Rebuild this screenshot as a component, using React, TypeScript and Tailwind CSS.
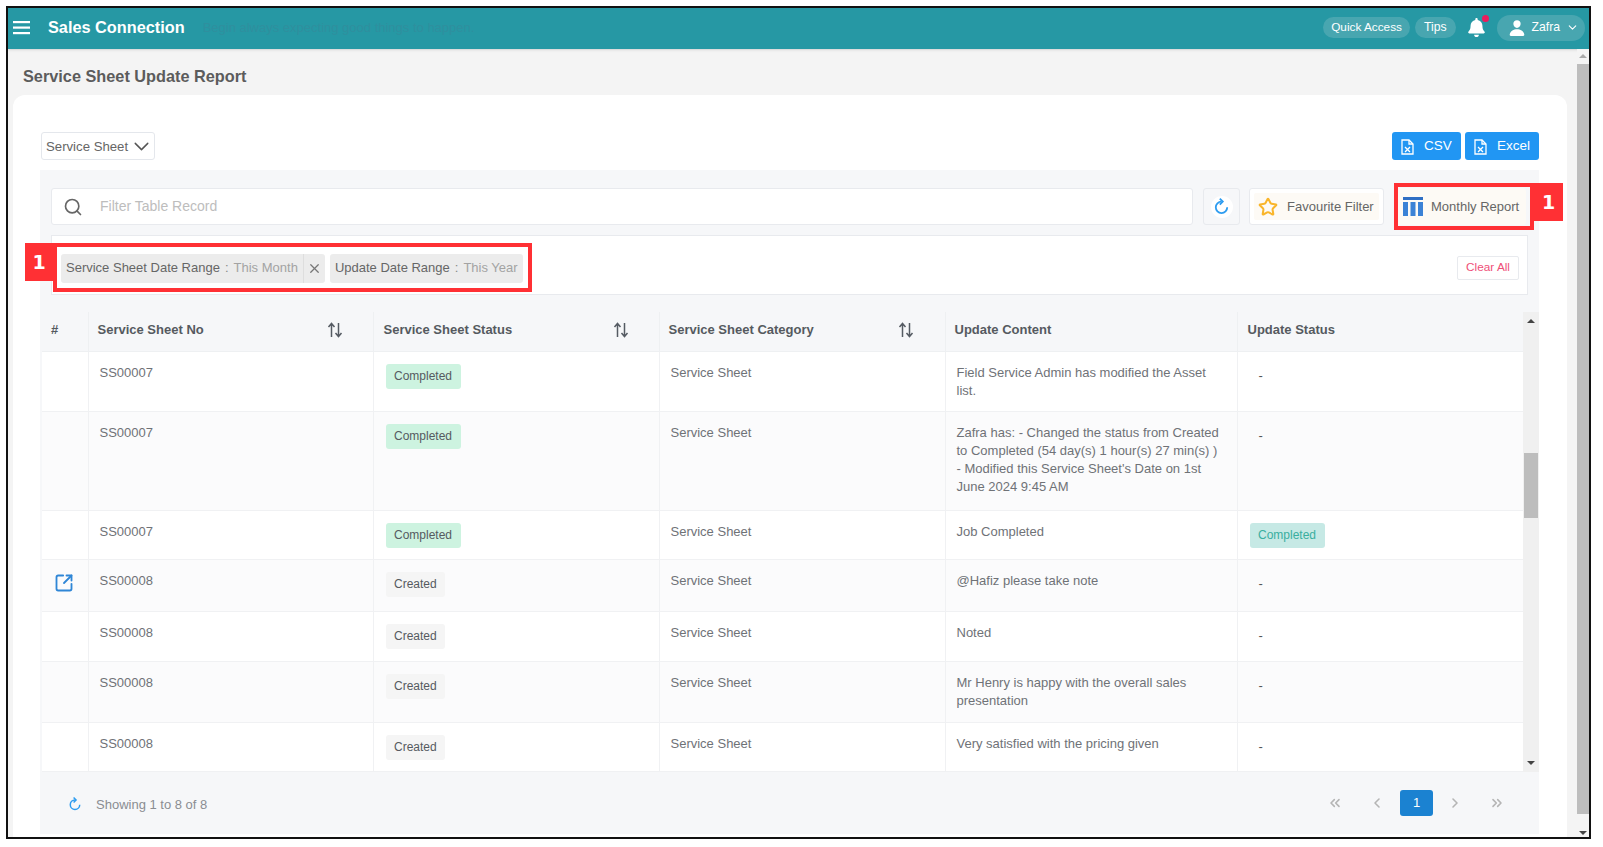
import React from "react";
import {
  ChevronDown,
  ChevronLeft,
  ChevronRight,
  ChevronsLeft,
  ChevronsRight,
  Search,
  SquareArrowOutUpRight,
  Star,
  X,
} from "lucide-react";
import { FaBell } from "react-icons/fa";
import { IoPerson } from "react-icons/io5";

interface Row {
  no: string;
  status: "Completed" | "Created";
  content: React.ReactNode;
  update?: boolean;
  link?: boolean;
  rowClass: string;
  alt?: boolean;
}

const rows: Row[] = [
  {
    no: "SS00007",
    status: "Completed",
    content: "Field Service Admin has modified the Asset list.",
    rowClass: "h-[60px]",
  },
  {
    no: "SS00007",
    status: "Completed",
    content:
      "Zafra has: - Changed the status from Created to Completed (54 day(s) 1 hour(s) 27 min(s) ) - Modified this Service Sheet's Date on 1st June 2024 9:45 AM",
    rowClass: "h-[99px]",
    alt: true,
  },
  {
    no: "SS00007",
    status: "Completed",
    content: "Job Completed",
    update: true,
    rowClass: "h-[49px]",
  },
  {
    no: "SS00008",
    status: "Created",
    content: "@Hafiz please take note",
    link: true,
    rowClass: "h-[52px]",
    alt: true,
  },
  {
    no: "SS00008",
    status: "Created",
    content: "Noted",
    rowClass: "h-[50px]",
  },
  {
    no: "SS00008",
    status: "Created",
    content: "Mr Henry is happy with the overall sales presentation",
    rowClass: "h-[61px]",
    alt: true,
  },
  {
    no: "SS00008",
    status: "Created",
    content: "Very satisfied with the pricing given",
    rowClass: "h-[49px]",
  },
];

const SortIcon = () => (
  <svg width="16" height="16" viewBox="0 0 16 16" fill="none" stroke="#555b63" strokeWidth="1.5">
    <path d="M4.5 15V2M1.5 5l3-3.5 3 3.5" />
    <path d="M11.5 1v13M8.5 11l3 3.5 3-3.5" />
  </svg>
);

const FileXIcon = () => (
  <svg width="13" height="16" viewBox="0 0 13 16" fill="none" stroke="white" strokeWidth="1.3">
    <path d="M1 1h7l4 4v10H1z" />
    <path d="M8 1v4h4" />
    <path d="M4 8l5 5M9 8l-5 5" />
  </svg>
);

const ColumnsIcon = () => (
  <svg width="20" height="19" viewBox="0 0 20 19" fill="#3b82d6">
    <rect x="0" y="0" width="20" height="3" fill="#2f6fc4" />
    <rect x="0" y="5" width="5" height="14" />
    <rect x="7.5" y="5" width="5" height="14" />
    <rect x="15" y="5" width="5" height="14" />
  </svg>
);

// circular arrow, open at the upper right with the head on top
const RefreshIcon = ({ size }: { size: number }) => (
  <svg width={size} height={size} viewBox="0 0 16 16" fill="none" stroke="#2d9cf0" strokeWidth="1.7">
    <path d="M8 3.4A5.4 5.4 0 1 0 13.4 8.8" />
    <path d="M6.4 0.6L9.2 3.4L6.4 6.2" />
  </svg>
);

const Marker = ({ className }: { className: string }) => (
  <div
    className={
      "absolute flex items-center justify-center bg-[#ff3034] text-[19px] font-bold text-white " +
      className
    }
    style={{ fontFamily: '"DejaVu Sans", sans-serif' }}
  >
    1
  </div>
);

const Chip = ({ label, value, close }: { label: string; value: string; close?: boolean }) => (
  <div className="flex h-[29px] items-center rounded-[3px] bg-[#ececec] text-[13px]">
    <span className="whitespace-nowrap pl-[5px] pr-[5px] text-[#666]">
      {label}
      <span className="mx-[5px] text-[#888]">:</span>
      <span className="text-[#a3a3a3]">{value}</span>
    </span>
    {close && (
      <span className="flex h-full w-[22px] items-center justify-center border-l border-[#dedede]">
        <X size={15} color="#777" />
      </span>
    )}
  </div>
);

const App: React.FC = () => {
  return (
    <div
      className="h-[847px] w-[1603px] overflow-hidden bg-white pl-[6px] pt-[6px] text-[13px] text-[#6f7277]"
      style={{ fontFamily: '"Liberation Sans", Arial, sans-serif' }}
    >
      <div className="flex h-[833px] w-[1585px] flex-col overflow-hidden border-2 border-[#111] bg-[#f4f4f4]">
        <header className="flex h-[41px] shrink-0 items-center bg-[#2698a4] pb-[2px] pl-[5px] pr-[4px] shadow-sm">
          <svg width="18" height="14" viewBox="0 0 18 14" fill="white">
            <rect y="0" width="17" height="2.2" />
            <rect y="5.5" width="17" height="2.2" />
            <rect y="11" width="17" height="2.2" />
          </svg>
          <span className="ml-[17px] text-[16.3px] font-bold text-white">Sales Connection</span>
          <span className="ml-[18px] text-[13px] text-[#2f8f9e]">
            Begin always expecting good things to happen.
          </span>
          <div className="ml-auto flex items-center">
            <span className="flex h-[21px] items-center rounded-full bg-[#48a6b0] px-[8px] text-[11.8px] text-white">
              Quick Access
            </span>
            <span className="ml-[5px] flex h-[21px] items-center rounded-full bg-[#48a6b0] px-[9px] text-[12.2px] text-white">
              Tips
            </span>
            <span className="relative ml-[11px] mr-[11px]">
              <FaBell size={19} color="white" />
              <span className="absolute -right-[3px] -top-[3px] h-[7px] w-[7px] rounded-full bg-[#ec1c5c]" />
            </span>
            <span className="flex h-[26px] items-center rounded-full bg-[#48a6b0] pl-[11px] pr-[6px] text-[12.2px] text-white">
              <IoPerson size={18} color="white" />
              <span className="ml-[6px]">Zafra</span>
              <ChevronDown size={13} className="ml-[6px]" />
            </span>
          </div>
        </header>

        <div className="flex min-h-0 flex-1">
          <div className="flex min-w-0 flex-1 flex-col">
            <h1 className="flex h-[46px] shrink-0 items-center pl-[15px] pt-[9px] text-[16.3px] font-bold text-[#5c5c5c]">
              Service Sheet Update Report
            </h1>
            <div className="ml-[5px] flex w-[1554px] flex-1 flex-col rounded-t-[12px] bg-white pb-[3px] pl-[27px] pr-[28px] pt-[37px]">
              <div className="flex h-[28px] items-center justify-between">
                <div className="ml-[1px] flex h-[28px] w-[114px] items-center justify-between whitespace-nowrap rounded-[3px] border border-[#e4e7ec] pl-[4px] pt-[1px] text-[13.2px] text-[#666]">
                  Service Sheet
                  <ChevronDown size={25} color="#555" strokeWidth={1.4} />
                </div>
                <div className="flex gap-[4px]">
                  <button className="flex h-[28px] w-[69px] items-center justify-center gap-[10px] rounded-[3px] bg-[#2196f3] pt-[1px] text-[13.5px] text-white">
                    <FileXIcon /> CSV
                  </button>
                  <button className="flex h-[28px] w-[74px] items-center justify-center gap-[10px] rounded-[3px] bg-[#2196f3] pt-[1px] text-[13.5px] text-white">
                    <FileXIcon /> Excel
                  </button>
                </div>
              </div>

              <div className="mt-[10px] flex flex-1 flex-col bg-[#f6f7f9]">
                <div className="relative flex pl-[11px] pr-[11px] pt-[18px]">
                  <div className="flex h-[37px] w-[1142px] items-center rounded-[3px] border border-[#e8eaee] bg-white pl-[11px] text-[14px] text-[#bdbdbd]">
                    <Search size={20} color="#666" />
                    <span className="ml-[17px]">Filter Table Record</span>
                  </div>
                  <div className="ml-[10px] flex h-[37px] w-[37px] items-center justify-center rounded-[3px] border border-[#e8eaee]">
                    <span className="flex h-[22px] w-[22px] items-center justify-center rounded-full bg-white">
                      <RefreshIcon size={17} />
                    </span>
                  </div>
                  <div className="ml-[9px] flex h-[37px] w-[135px] items-center rounded-[3px] border border-[#e8eaee] bg-white p-[4px]">
                    <div className="flex h-full w-full items-center rounded-[2px] bg-[#fdfaf5] pl-[4px] text-[13px] text-[#666]">
                      <Star size={20} color="#f9b52a" strokeWidth={2.4} />
                      <span className="ml-[9px]">Favourite Filter</span>
                    </div>
                  </div>
                  <div className="ml-[14px] flex h-[37px] w-[128px] items-center rounded-[3px] bg-[#fdfaf5] pl-[5px] text-[13px] text-[#666]">
                    <ColumnsIcon />
                    <span className="ml-[8px]">Monthly Report</span>
                  </div>
                  <div className="absolute left-[1354px] top-[13px] h-[47px] w-[140px] border-[4px] border-[#ff3034]" />
                  <Marker className="left-[1494px] top-[13px] h-[38px] w-[29px]" />
                </div>

                <div className="relative ml-[11px] mt-[10px] flex h-[60px] w-[1477px] items-center justify-between border border-[#e8eaee] bg-white pl-[9px] pr-[8px] pt-[6px]">
                  <div className="flex items-center gap-[5px]">
                    <Chip label="Service Sheet Date Range" value="This Month" close />
                    <Chip label="Update Date Range" value="This Year" />
                  </div>
                  <span className="flex h-[24px] items-center rounded-[2px] border border-[#e8eaee] px-[8px] text-[11.8px] text-[#ef4f78]">
                    Clear All
                  </span>
                  <div className="absolute left-[1px] top-[7px] h-[49px] w-[479px] border-[4px] border-[#ff3034]" />
                  <Marker className="-left-[27px] top-[7px] h-[38px] w-[28px]" />
                </div>

                <div className="ml-[1px] mt-[17px] flex min-h-0">
                  <table className="ml-[1px] w-[1481px] table-fixed border-collapse">
                    <colgroup>
                      <col className="w-[46px]" />
                      <col className="w-[285px]" />
                      <col className="w-[286px]" />
                      <col className="w-[286px]" />
                      <col className="w-[292px]" />
                      <col className="w-[286px]" />
                    </colgroup>
                    <thead>
                      <tr className="h-[39px] border-b border-[#eef0f2] text-left text-[13px] font-bold text-[#555a60]">
                        <th className="border-r border-[#eef0f2] pb-[3px] pl-[9px]">#</th>
                        <th className="border-r border-[#eef0f2] pb-[3px] pl-[9px]">
                          <div className="flex items-center justify-between pr-[30px]">
                            Service Sheet No <SortIcon />
                          </div>
                        </th>
                        <th className="border-r border-[#eef0f2] pb-[3px] pl-[10px]">
                          <div className="flex items-center justify-between pr-[30px]">
                            Service Sheet Status <SortIcon />
                          </div>
                        </th>
                        <th className="border-r border-[#eef0f2] pb-[3px] pl-[9px]">
                          <div className="flex items-center justify-between pr-[31px]">
                            Service Sheet Category <SortIcon />
                          </div>
                        </th>
                        <th className="border-r border-[#eef0f2] pb-[3px] pl-[9px]">Update Content</th>
                        <th className="pb-[3px] pl-[10px]">Update Status</th>
                      </tr>
                    </thead>
                    <tbody>
                      {rows.map((row, index) => (
                        <tr
                          key={index}
                          className={
                            "border-b border-[#f0f1f3] align-top leading-[18px] " +
                            row.rowClass +
                            (row.alt ? " bg-[#fbfbfc]" : " bg-white")
                          }
                        >
                          <td className="border-r border-[#f0f1f3] pl-[12px] pt-[13px]">
                            {row.link && (
                              <SquareArrowOutUpRight size={20} color="#2f86d6" strokeWidth={2.2} />
                            )}
                          </td>
                          <td className="border-r border-[#f0f1f3] pl-[11px] pt-[12px]">{row.no}</td>
                          <td className="border-r border-[#f0f1f3] pl-[12px] pt-[12px]">
                            <span
                              className={
                                "inline-block rounded-[3px] px-[8.5px] py-[4px] text-[12px] leading-[17px] text-[#555a60] " +
                                (row.status === "Completed" ? "bg-[#cdf3e0]" : "bg-[#f5f5f5]")
                              }
                            >
                              {row.status}
                            </span>
                          </td>
                          <td className="border-r border-[#f0f1f3] pl-[11px] pt-[12px]">Service Sheet</td>
                          <td className="border-r border-[#f0f1f3] pl-[11px] pr-[16px] pt-[12px]">
                            {row.content}
                          </td>
                          <td className="pl-[12px] pt-[12px]">
                            {row.update ? (
                              <span className="inline-block rounded-[3px] bg-[#c6e9e5] px-[8.5px] py-[4px] text-[12px] leading-[17px] text-[#3aae9f]">
                                Completed
                              </span>
                            ) : (
                              <span className="block pl-[9px] pt-[3px] text-[#555]">-</span>
                            )}
                          </td>
                        </tr>
                      ))}
                    </tbody>
                  </table>
                  <div className="relative w-[16px] shrink-0 bg-[#f0f0f0]">
                    <span className="absolute left-[4px] top-[7px] h-0 w-0 border-x-[4px] border-b-[4px] border-x-transparent border-b-[#444]" />
                    <div className="absolute left-[1px] top-[141px] h-[65px] w-[14px] bg-[#bdbdbd]" />
                    <span className="absolute bottom-[7px] left-[4px] h-0 w-0 border-x-[4px] border-t-[4px] border-x-transparent border-t-[#444]" />
                  </div>
                </div>

                <div className="flex flex-1 items-center justify-between pl-[28px] pr-[34px]">
                  <div className="flex items-center pt-[3px]">
                    <RefreshIcon size={14} />
                    <span className="ml-[14px] text-[13px] text-[#8a8d92]">Showing 1 to 8 of 8</span>
                  </div>
                  <div className="flex items-center">
                    <ChevronsLeft size={16} color="#b5b5b5" strokeWidth={2.4} />
                    <ChevronLeft size={16} color="#b5b5b5" strokeWidth={2.4} className="ml-[26px]" />
                    <span className="ml-[15px] flex h-[26px] w-[33px] items-center justify-center rounded-[3px] bg-[#1b82d1] text-white">
                      1
                    </span>
                    <ChevronRight size={16} color="#b5b5b5" strokeWidth={2.4} className="ml-[14px]" />
                    <ChevronsRight size={16} color="#b5b5b5" strokeWidth={2.4} className="ml-[26px]" />
                  </div>
                </div>
              </div>
            </div>
          </div>
          <div className="relative w-[12px] shrink-0 bg-[#f4f4f4]">
            <span className="absolute left-[2px] top-[5px] h-0 w-0 border-x-[4px] border-b-[4px] border-x-transparent border-b-[#aaa]" />
            <div className="absolute left-0 top-[15px] h-[750px] w-full bg-[#bdbdbd]" />
            <span className="absolute bottom-[2px] left-[2px] h-0 w-0 border-x-[4px] border-t-[4px] border-x-transparent border-t-[#444]" />
          </div>
        </div>
      </div>
    </div>
  );
};

export default App;
